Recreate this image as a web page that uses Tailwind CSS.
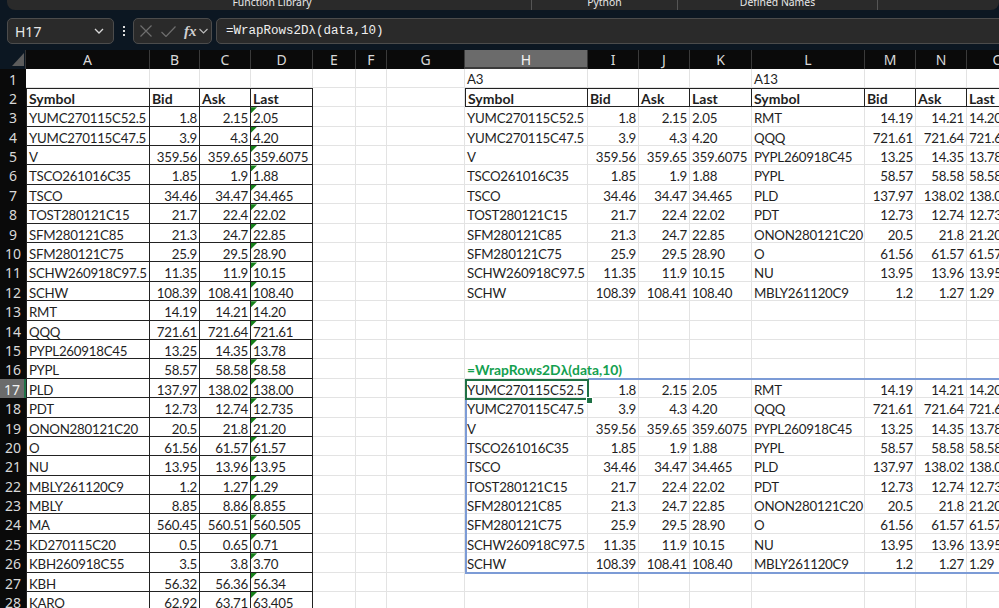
<!DOCTYPE html>
<html lang="en">
<head>
    <meta charset="UTF-8">
    <title>WrapRows2D</title>
    <script src="https://cdn.jsdelivr.net/npm/@tailwindcss/browser@4"></script>
</head>
<body class="w-[999px] h-[608px] overflow-hidden bg-[#0c1722] font-['Lato',sans-serif]">
    <!-- ribbon group labels, cut off by the top of the window -->
    <div class="h-[10px] ml-[7px] flex bg-[#2a2a2a] rounded-b-lg overflow-hidden text-[10.4px] leading-[12px] text-[#e8e8e8] font-['Noto_Sans',sans-serif]">
        <div class="w-[525px] shrink-0 text-center mt-[-4px] pl-[6px] border-r border-[#555]">Function Library</div>
        <div class="w-[146px] shrink-0 text-center mt-[-4px] border-r border-[#555]">Python</div>
        <div class="w-[200px] shrink-0 text-center mt-[-4px] border-r border-[#555]">Defined Names</div>
    </div>
    <!-- formula bar -->
    <div class="h-[40px] pt-[8px] pl-[7px] flex items-start bg-[#0c1722]">
        <div class="w-[107px] h-[26px] shrink-0 flex items-center justify-between pl-[7px] pr-[9px] bg-[#2a2a2a] border border-[#4c4c4c] rounded-[5px] text-[14px] text-[#e6e6e6] font-['Noto_Sans',sans-serif]">
            <span>H17</span>
            <svg width="10" height="6" viewBox="0 0 10 6" fill="none" stroke="#d8d8d8" stroke-width="1.3"><path d="M1 1l4 4 4-4"/></svg>
        </div>
        <div class="w-[19px] h-[26px] shrink-0 flex flex-col items-center justify-center gap-[2px]">
            <span class="w-[2px] h-[2px] bg-[#ddd]"></span>
            <span class="w-[2px] h-[2px] bg-[#ddd]"></span>
            <span class="w-[2px] h-[2px] bg-[#ddd]"></span>
        </div>
        <div class="w-[79px] h-[26px] shrink-0 flex items-center pl-[6px] bg-[#2a2a2a] border border-[#4c4c4c] rounded-[5px]">
            <svg width="12" height="12" viewBox="0 0 12 12" fill="none" stroke="#6e6e6e" stroke-width="1.2"><path d="M0.5 0.5l11 11M11.5 0.5l-11 11"/></svg>
            <svg class="ml-[9px]" width="15" height="11" viewBox="0 0 15 11" fill="none" stroke="#6e6e6e" stroke-width="1.2"><path d="M0.5 6l4.5 4.5L14.5 0.5"/></svg>
            <span class="ml-[8px] text-[15px] leading-none italic font-bold text-[#d0d0d0] font-['Liberation_Serif',serif]">fx</span>
            <svg class="ml-[2px]" width="9" height="6" viewBox="0 0 9 6" fill="none" stroke="#bdbdbd" stroke-width="1.1"><path d="M0.5 1l4 4 4-4"/></svg>
        </div>
        <div class="w-[800px] h-[26px] shrink-0 ml-[4px] pl-[9px] flex items-center bg-[#2a2a2a] border border-[#4c4c4c] rounded-[5px] text-[12.5px] text-[#f0f0f0] font-['Liberation_Mono',monospace]">=WrapRows2Dλ(data,10)</div>
    </div>
    <!-- sheet -->
    <div class="relative">
        <div id="sheet" class="grid grid-cols-[26px_124px_50px_51px_62px_43px_31px_78px_123px_51px_51px_62px_113px_51px_51px_63px] grid-rows-[18.5px] auto-rows-[19.4px] text-[13.3px] tracking-[-0.25px] leading-[22px] text-[#1f1f1f]"></div>
        <!-- corner triangle of the select-all button -->
        <div class="absolute left-[12px] top-[3px] w-[12px] h-[13px] bg-[#5c5c5c] [clip-path:polygon(100%_0,100%_100%,0_100%)]"></div>
        <!-- spill range and active cell -->
        <div class="absolute left-[465px] top-[328px] w-[540px] h-[196px] border-2 border-[#7c9bd6] pointer-events-none"></div>
        <div class="absolute left-[465px] top-[329px] w-[124px] h-[21px] border-2 border-[#1f7145] pointer-events-none"></div>
        <div class="absolute left-[586px] top-[347px] w-[5px] h-[5px] bg-[#1f7145] border border-white box-content pointer-events-none"></div>
    </div>
    <script>
        const rows = [
            ['YUMC270115C52.5', '1.8', '2.15', '2.05'],
            ['YUMC270115C47.5', '3.9', '4.3', '4.20'],
            ['V', '359.56', '359.65', '359.6075'],
            ['TSCO261016C35', '1.85', '1.9', '1.88'],
            ['TSCO', '34.46', '34.47', '34.465'],
            ['TOST280121C15', '21.7', '22.4', '22.02'],
            ['SFM280121C85', '21.3', '24.7', '22.85'],
            ['SFM280121C75', '25.9', '29.5', '28.90'],
            ['SCHW260918C97.5', '11.35', '11.9', '10.15'],
            ['SCHW', '108.39', '108.41', '108.40'],
            ['RMT', '14.19', '14.21', '14.20'],
            ['QQQ', '721.61', '721.64', '721.61'],
            ['PYPL260918C45', '13.25', '14.35', '13.78'],
            ['PYPL', '58.57', '58.58', '58.58'],
            ['PLD', '137.97', '138.02', '138.00'],
            ['PDT', '12.73', '12.74', '12.735'],
            ['ONON280121C20', '20.5', '21.8', '21.20'],
            ['O', '61.56', '61.57', '61.57'],
            ['NU', '13.95', '13.96', '13.95'],
            ['MBLY261120C9', '1.2', '1.27', '1.29'],
            ['MBLY', '8.85', '8.86', '8.855'],
            ['MA', '560.45', '560.51', '560.505'],
            ['KD270115C20', '0.5', '0.65', '0.71'],
            ['KBH260918C55', '3.5', '3.8', '3.70'],
            ['KBH', '56.32', '56.36', '56.34'],
            ['KARO', '62.92', '63.71', '63.405']
        ];
        const head = ['Symbol', 'Bid', 'Ask', 'Last'];
        const cols = 'ABCDEFGHIJKLMNO'.split('');

        // what sits in a given cell: [text, column offset inside its 4-col table]
        function lookup(c, r) {
            if (r === 1 && c === 7) return ['A3', 0];
            if (r === 1 && c === 11) return ['A13', 0];
            if (r === 1) return ['', 0];
            if (c < 4) {
                if (r === 2) return [head[c], c];
                return [rows[r - 3][c], c];
            }
            if (c >= 7) {
                const off = (c - 7) % 4;
                const block = Math.floor((c - 7) / 4);
                if (r === 2) return [head[off], off];
                if (r >= 3 && r <= 12) return [rows[r - 3 + block * 10][off], off];
                if (r >= 17 && r <= 26) return [rows[r - 17 + block * 10][off], off];
            }
            return ['', 0];
        }

        let html = '<div class="bg-[#0c1722] border-r border-[#333]"></div>';
        cols.forEach((name, c) => {
            const cls = c === 7
                ? 'bg-[#6b6b6b] text-[#f2f2f2] border-b-2 border-[#1f7145]'
                : 'bg-[#0a0a0a] text-[#d9d9d9]';
            html += `<div class="${cls} border-r border-[#3a3a3a] text-center text-[14px] tracking-normal leading-[19px] font-['Noto_Sans',sans-serif]">${name}</div>`;
        });
        for (let r = 1; r <= 28; r++) {
            const rowCls = r === 17
                ? 'bg-[#6b6b6b] text-[#f2f2f2] border-r-2 border-[#1f7145]'
                : 'bg-[#0a0a0a] text-[#d9d9d9]';
            html += `<div class="${rowCls} text-center text-[14px] tracking-normal leading-[21px] font-['Noto_Sans',sans-serif]">${r}</div>`;
            cols.forEach((name, c) => {
                const [text, off] = lookup(c, r);
                const inLeft = c < 4 && r >= 2;
                const inHead = c >= 7 && r === 2;
                let cls = 'relative bg-white whitespace-nowrap ';
                cls += (inLeft || inHead) ? 'border-r border-b border-[#222] ' : 'border-r border-b border-[#e3e3e3] ';
                if ((inLeft || inHead) && r === 2) cls += 'border-t ';
                if ((inLeft && c === 0) || (inHead && c === 7)) cls += 'border-l ';
                if (r <= 2) cls += 'leading-[20px] ';
                if (r === 2) cls += 'font-bold text-[14px] tracking-normal pl-[2px] ';
                else if (off === 1 || off === 2) cls += 'text-right pr-[2px] ';
                else cls += 'pl-[2px] ';
                let inner = text;
                if (c === 3 && r >= 3) {
                    inner = '<span class="absolute left-0 top-0 w-[6px] h-[6px] bg-[#15801a] [clip-path:polygon(0_0,100%_0,0_100%)]"></span>' + text;
                }
                if (r === 16 && c === 7) {
                    cls += 'font-bold text-[13.85px] tracking-normal text-[#13a04f] z-10 ';
                    inner = '=WrapRows2Dλ(data,10)';
                }
                html += `<div class="${cls}">${inner}</div>`;
            });
        }
        document.getElementById('sheet').innerHTML = html;
    </script>
</body>
</html>
